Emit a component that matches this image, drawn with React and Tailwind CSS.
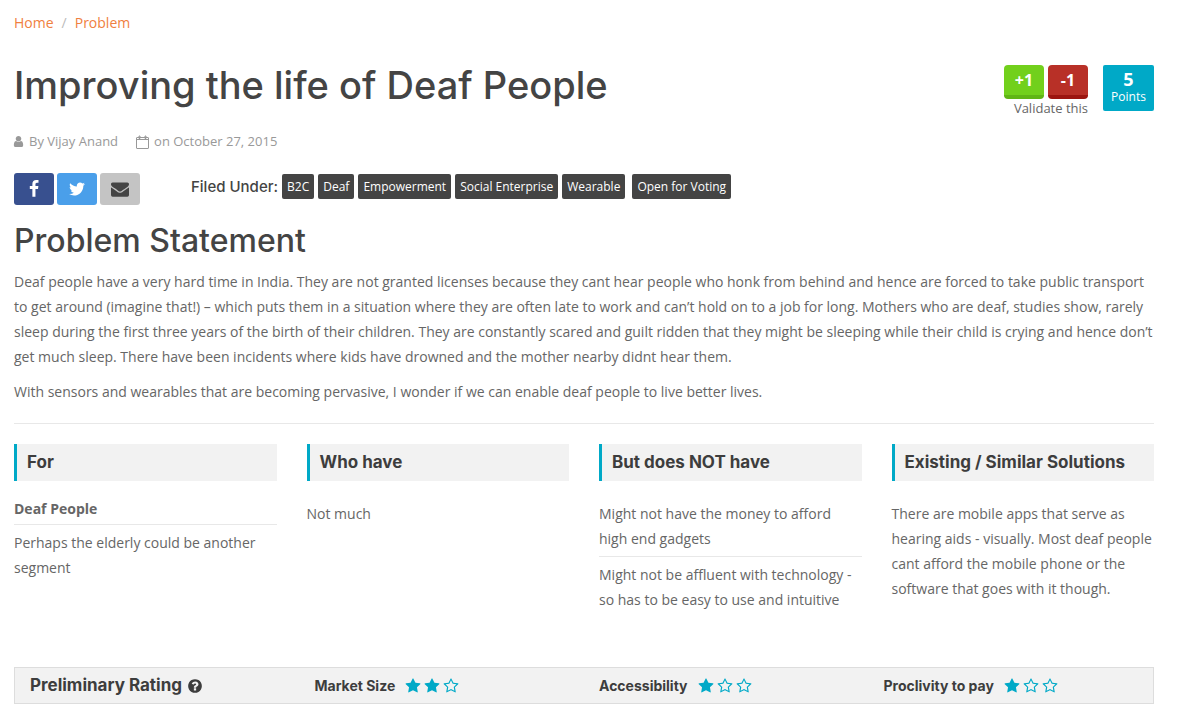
import React from "react";

const icons = {
  user: "M1536 1399q0 109-62.5 187t-150.5 78h-854q-88 0-150.5-78t-62.5-187q0-85 8.5-160.5t31.5-152 58.5-131 94-89 134.5-34.5q131 128 313 128t313-128q76 0 134.5 34.5t94 89 58.5 131 31.5 152 8.5 160.5zm-256-887q0 159-112.5 271.5t-271.5 112.5-271.5-112.5-112.5-271.5 112.5-271.5 271.5-112.5 271.5 112.5 112.5 271.5z",
  facebook: "M1343 12v264h-157q-86 0-116 36t-30 108v189h293l-39 296h-254v759h-306v-759h-255v-296h255v-218q0-186 104-288.5t277-102.5q147 0 228 12z",
  twitter: "M1684 408q-67 98-162 167 1 14 1 42 0 130-38 259.5t-115.5 248.5-184.5 210.5-258 146-323 54.5q-271 0-496-145 35 4 78 4 225 0 401-138-105-2-188-64.5t-114-159.5q33 5 61 5 43 0 85-11-112-23-185.5-111.5t-73.5-205.5v-4q68 38 146 41-66-44-105-115t-39-154q0-88 44-163 121 149 294.5 238.5t371.5 99.5q-8-38-8-74 0-134 94.5-228.5t228.5-94.5q140 0 236 102 109-21 205-78-37 115-142 178 93-10 186-50z",
  envelope: "M1792 710v794q0 66-47 113t-113 47h-1472q-66 0-113-47t-47-113v-794q44 49 101 87 362 246 497 345 57 42 92.5 65.5t94.5 48 110 24.5h2q51 0 110-24.5t94.5-48 92.5-65.5q170-123 498-345 57-39 100-87zm0-294q0 79-49 151t-122 123q-376 261-468 325-10 7-42.5 31t-54 38.5-52 32.5-57.5 27-50 9h-2q-23 0-50-9t-57.5-27-52-32.5-54-38.5-42.5-31q-91-64-262-182.5t-205-142.5q-62-42-117-115.5t-55-136.5q0-78 41.5-130t118.5-52h1472q65 0 112.5 47t47.5 113z",
  question: "M1024 1376v-192q0-14-9-23t-23-9h-192q-14 0-23 9t-9 23v192q0 14 9 23t23 9h192q14 0 23-9t9-23zm256-672q0-88-55.5-163t-138.5-116-170-41q-243 0-371 213-15 24 8 42l132 100q7 6 19 6 16 0 25-12 53-68 86-92 34-24 86-24 48 0 85.5 26t37.5 59q0 38-20 61t-68 45q-63 28-115.5 86.5t-52.5 125.5v36q0 14 9 23t23 9h192q14 0 23-9t9-23q0-19 21.5-49.5t54.5-49.5q32-18 49-28.5t46-35 44.5-48 28-60.5 12.5-81zm384 192q0 209-103 385.5t-279.5 279.5-385.5 103-385.5-103-279.5-279.5-103-385.5 103-385.5 279.5-279.5 385.5-103 385.5 103 279.5 279.5 103 385.5z",
  star: "M1728 647q0 22-26 48l-363 354 86 500q1 7 1 20 0 21-10.5 35.5t-30.5 14.5q-19 0-40-12l-449-236-449 236q-22 12-40 12-21 0-31.5-14.5t-10.5-35.5q0-6 2-20l86-500-364-354q-25-27-25-48 0-37 56-46l502-73 225-455q19-41 49-41t49 41l225 455 502 73q56 9 56 46z",
  starEmpty: "M1201 1004l306-297-422-62-189-382-189 382-422 62 306 297-73 421 378-199 377 199zm527-357q0 22-26 48l-363 354 86 500q1 7 1 20 0 50-41 50-19 0-40-12l-449-236-449 236q-22 12-40 12-21 0-31.5-14.5t-10.5-35.5q0-6 2-20l86-500-364-354q-25-27-25-48 0-37 56-46l502-73 225-455q19-41 49-41t49 41l225 455 502 73q56 9 56 46z",
};

const tags = ["B2C", "Deaf", "Empowerment", "Social Enterprise", "Wearable"];

const ratings = [
  { label: "Market Size", value: 2 },
  { label: "Accessibility", value: 1 },
  { label: "Proclivity to pay", value: 1 },
];

function Icon({ name, className }) {
  return (
    <svg viewBox="0 0 1792 1792" fill="currentColor" aria-hidden="true" className={className}>
      <path d={icons[name]} />
    </svg>
  );
}

function CalendarIcon() {
  return (
    <svg viewBox="0 0 13 14" fill="none" stroke="currentColor" aria-hidden="true" className="h-[14px] w-[13px]">
      <rect x="0.5" y="2.5" width="12" height="11" rx="0.5" />
      <path d="M0.5 4.5h12" />
      <path d="M3 1h1v2.5h-1zM9 1h1v2.5h-1z" />
    </svg>
  );
}

function Tag({ children }) {
  return (
    <a href="#" className="rounded-xs bg-[#444] px-[5px] text-xs leading-[25px] text-white">
      {children}
    </a>
  );
}

function Column({ title, children }) {
  return (
    <section>
      <h3 className="border-l-3 border-[#00a9c7] bg-[#f2f2f2] pl-[10px] font-[Inter,sans-serif] text-[17px] leading-[37px] font-bold text-[#3d3d3d]">
        {title}
      </h3>
      {children}
    </section>
  );
}

function Rating({ label, value }) {
  return (
    <div className="flex items-center gap-[10px] px-[15px]">
      <span className="font-[Inter,sans-serif] text-sm font-bold">{label}</span>
      <span className="flex gap-[3px] text-[#00a9c7]" role="img" aria-label={`${value} of 3 stars`}>
        {[1, 2, 3].map((n) => (
          <Icon key={n} name={n <= value ? "star" : "starEmpty"} className="size-4" />
        ))}
      </span>
    </div>
  );
}

export default function App() {
  return (
    <main className="bg-white pt-[10px] pr-[37px] pb-6 pl-[14px] font-['Open_Sans',sans-serif] text-sm leading-[25px] text-[#666]">
      <nav aria-label="Breadcrumb" className="flex gap-2 text-[#f08040]">
        <a href="#">Home</a>
        <span className="text-[#bbb]">/</span>
        <a href="#">Problem</a>
      </nav>

      <header className="mt-[30px] flex items-start justify-between">
        <h1 className="font-[Inter,sans-serif] text-[38px] leading-10 font-medium text-[#444]">
          Improving the life of Deaf People
        </h1>
        <div className="flex gap-[15px]">
          <div className="text-right">
            <div className="flex gap-1">
              <button className="h-[34px] w-10 rounded border-b-4 border-[#60b515] bg-[#72d01c] text-base leading-[30px] font-bold text-white">
                +1
              </button>
              <button className="h-[34px] w-10 rounded border-b-4 border-[#9c1510] bg-[#b83027] text-base leading-[30px] font-bold text-white">
                -1
              </button>
            </div>
            <p className="text-[13px] leading-[18px]">Validate this</p>
          </div>
          <div className="h-[46px] w-[51px] rounded-xs bg-[#00a9c7] pt-1 text-center text-white">
            <strong className="block text-lg leading-5">5</strong>
            <span className="block text-xs leading-4">Points</span>
          </div>
        </div>
      </header>

      <div className="mt-3 flex items-center gap-[18px] text-[13px] text-[#999]">
        <span className="flex items-center gap-1">
          <Icon name="user" className="-ml-0.5 size-[13px]" />
          By Vijay Anand
        </span>
        <span className="flex items-center gap-[5px]">
          <CalendarIcon />
          on October 27, 2015
        </span>
      </div>

      <div className="mt-[19px] flex items-start">
        <div className="flex gap-[3px]">
          <button aria-label="Share on Facebook" className="flex h-8 w-10 items-center justify-center rounded-[3px] bg-[#38508f] text-white">
            <Icon name="facebook" className="size-[18px]" />
          </button>
          <button aria-label="Share on Twitter" className="flex h-8 w-10 items-center justify-center rounded-[3px] bg-[#4a9fea] text-white">
            <Icon name="twitter" className="size-[18px]" />
          </button>
          <button aria-label="Share by email" className="flex h-8 w-10 items-center justify-center rounded-[3px] bg-[#c4c4c4] text-[#444]">
            <Icon name="envelope" className="size-[18px]" />
          </button>
        </div>
        <div className="mt-px ml-[51px] flex items-center gap-1">
          <span className="font-[Inter,sans-serif] text-[15px] font-medium text-[#444]">Filed Under:</span>
          {tags.map((tag) => (
            <Tag key={tag}>{tag}</Tag>
          ))}
          <span className="ml-[3px] flex">
            <Tag>Open for Voting</Tag>
          </span>
        </div>
      </div>

      <h2 className="mt-[18px] font-[Inter,sans-serif] text-[32px] leading-9 font-medium text-[#444]">
        Problem Statement
      </h2>
      <p className="mt-[10px]">
        Deaf people have a very hard time in India. They are not granted licenses because they cant hear people who
        honk from behind and hence are forced to take public transport to get around (imagine that!) – which puts them
        in a situation where they are often late to work and can’t hold on to a job for long. Mothers who are deaf,
        studies show, rarely sleep during the first three years of the birth of their children. They are constantly
        scared and guilt ridden that they might be sleeping while their child is crying and hence don’t get much sleep.
        There have been incidents where kids have drowned and the mother nearby didnt hear them.
      </p>
      <p className="mt-[10px]">
        With sensors and wearables that are becoming pervasive, I wonder if we can enable deaf people to live better
        lives.
      </p>

      <hr className="mt-[19px] mb-5 border-[#e8e8e8]" />

      <div className="grid grid-cols-4 gap-[30px]">
        <Column title="For">
          <p className="mt-[15px] border-b border-[#e8e8e8] pb-[3px] font-bold">Deaf People</p>
          <p className="mt-[5px]">Perhaps the elderly could be another segment</p>
        </Column>
        <Column title="Who have">
          <p className="mt-5">Not much</p>
        </Column>
        <Column title="But does NOT have">
          <p className="mt-5 border-b border-[#e8e8e8] pb-[5px]">Might not have the money to afford high end gadgets</p>
          <p className="mt-[5px]">Might not be affluent with technology - so has to be easy to use and intuitive</p>
        </Column>
        <Column title="Existing / Similar Solutions">
          <p className="mt-5">
            There are mobile apps that serve as hearing aids - visually. Most deaf people cant afford the mobile phone
            or the software that goes with it though.
          </p>
        </Column>
      </div>

      <div className="mt-[55px] grid grid-cols-4 border border-[#ddd] bg-[#f2f2f2] py-[5px] text-[#3d3d3d]">
        <h3 className="flex items-center gap-[5px] pl-[15px] font-[Inter,sans-serif] text-[17px] leading-[25px] font-bold">
          Preliminary Rating
          <Icon name="question" className="size-4" />
        </h3>
        {ratings.map((r) => (
          <Rating key={r.label} label={r.label} value={r.value} />
        ))}
      </div>
    </main>
  );
}
